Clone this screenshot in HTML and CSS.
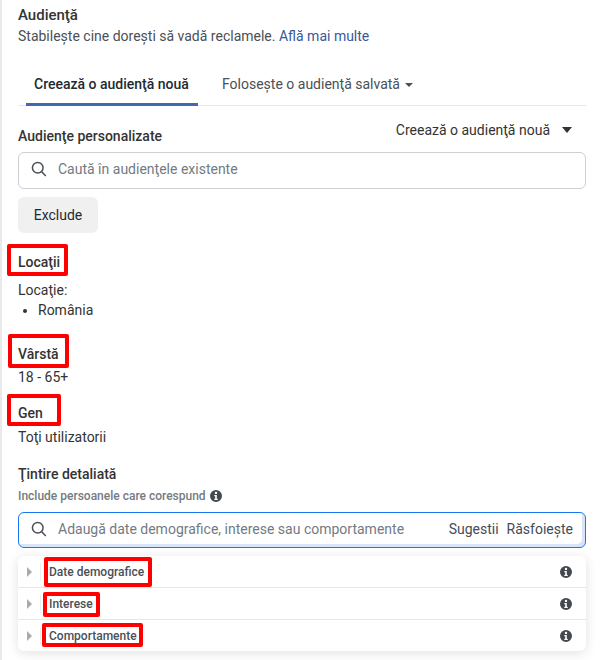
FILE: index.html
```html
<!DOCTYPE html>
<html lang="ro">
<head>
<meta charset="utf-8">
<title>Audienţă</title>
<link rel="stylesheet" href="styles.css">
</head>
<body>
<main class="page">
  <h1 class="title">Audienţă</h1>
  <p class="subtitle">Stabileşte cine doreşti să vadă reclamele. <a class="link" href="#">Află mai multe</a></p>

  <nav class="tabs">
    <a class="tab tab-active" href="#">Creează o audienţă nouă</a>
    <a class="tab" href="#">Foloseşte o audienţă salvată<span class="caret caret-small"></span></a>
  </nav>

  <section class="custom">
    <div class="custom-head">
      <h2 class="label">Audienţe personalizate</h2>
      <span class="create">Creează o audienţă nouă<span class="caret"></span></span>
    </div>
    <div class="search">
      <svg class="search-icon" viewBox="0 0 18 18"><circle cx="7.6" cy="7.6" r="6" /><path d="M12 12l4.6 4.8" /></svg>
      <span class="placeholder">Caută în audienţele existente</span>
    </div>
    <button class="btn" type="button">Exclude</button>
  </section>

  <section class="loc">
    <h2 class="label">Locaţii</h2>
    <p class="text loc-name">Locaţie:</p>
    <ul class="list"><li>România</li></ul>
  </section>

  <section class="age">
    <h2 class="label">Vârstă</h2>
    <p class="text">18 - 65+</p>
  </section>

  <section class="gender">
    <h2 class="label">Gen</h2>
    <p class="text gender-value">Toţi utilizatorii</p>
  </section>

  <section class="detail">
    <h2 class="label">Ţintire detaliată</h2>
    <p class="hint">Include persoanele care corespund
      <svg class="info info-hint" viewBox="0 0 12 12"><use href="#i"/></svg>
    </p>
    <div class="search search-focus">
      <svg class="search-icon" viewBox="0 0 18 18"><circle cx="7.6" cy="7.6" r="6" /><path d="M12 12l4.6 4.8" /></svg>
      <span class="placeholder grow">Adaugă date demografice, interese sau comportamente</span>
      <span class="action">Sugestii</span>
      <span class="action">Răsfoieşte</span>
    </div>
    <ul class="tree">
      <li class="row"><span class="arrow"></span><span class="sep"></span><span class="row-name">Date demografice</span><svg class="info" viewBox="0 0 12 12"><use href="#i"/></svg></li>
      <li class="row"><span class="arrow"></span><span class="sep"></span><span class="row-name">Interese</span><svg class="info" viewBox="0 0 12 12"><use href="#i"/></svg></li>
      <li class="row"><span class="arrow"></span><span class="sep"></span><span class="row-name">Comportamente</span><svg class="info" viewBox="0 0 12 12"><use href="#i"/></svg></li>
    </ul>
  </section>

  <div class="mark m1"></div>
  <div class="mark m2"></div>
  <div class="mark m3"></div>
  <div class="mark m4"></div>
  <div class="mark m5"></div>
  <div class="mark m6"></div>
</main>
<svg class="defs" width="0" height="0"><defs><g id="i"><path fill-rule="evenodd" d="M6 0a6 6 0 1 1 0 12A6 6 0 0 1 6 0zM4.8 2.9a1.2 1.2 0 1 0 2.4 0 1.2 1.2 0 0 0-2.4 0zM4.3 5v1.2h.9v2.6h-.9V10h3.4V8.800h-.9V5z"/></g></defs></svg>
</body>
</html>
```
FILE: styles.css
```css
* { box-sizing: border-box; }
html, body { margin: 0; padding: 0; background: #fff; }
body { font-family: Roboto, "Liberation Sans", sans-serif; color: #1c2b33; overflow: hidden; }
.page { position: relative; width: 602px; height: 660px; overflow: hidden; border-left: 2px solid #e9e9e9; padding: 6px 16px 0 16px; font-size: 14px; line-height: 18px; }
.title { margin: 0; font-size: 15px; font-weight: 500; line-height: 18px; color: #333; }
.subtitle { margin: 3px 0 0; color: #4b4f56; line-height: 18px; }
.link { color: #385898; text-decoration: none; }
.tabs { display: flex; margin-top: 26px; height: 35px; border-bottom: 1px solid #e4e6eb; padding-left: 8px; }
.tab { height: 35px; color: #4b4f56; text-decoration: none; padding: 4px 8px 0; line-height: 18px; margin-right: 16px; }
.tab-active { font-weight: 500; color: #1c2b33; border-bottom: 3px solid #4267b2; width: 172px; margin-right: 16px; white-space: nowrap; }
.caret { display: inline-block; width: 0; height: 0; border-left: 5.500px solid transparent; border-right: 5.500px solid transparent; border-top: 6px solid #333; margin-left: 12px; vertical-align: 2px; }
.caret-small { border-left-width: 4.500px; border-right-width: 4.500px; border-top-width: 4.500px; margin-left: 5px; border-top-color: #4b4f56; vertical-align: 2px; }
.custom-head { display: flex; justify-content: space-between; margin-top: 13px; height: 33px; }
.create { color: #333; padding: 2px 14px 0 0; }
.label { margin: 0; font-size: 14px; font-weight: 500; line-height: 18px; color: #333; }
.custom-head .label { padding-top: 8px; }
.search { display: flex; align-items: center; height: 37px; border: 1px solid #ccd0d5; border-radius: 6px; padding: 0 12px 3px; background: #fff; }
.search-focus { height: 36px; padding-bottom: 2px; border-color: #1877f2; box-shadow: inset -3px -3px 0 #d8e4f8; }
.search-icon { width: 16px; height: 16px; fill: none; stroke: #4b4f56; stroke-width: 1.700; flex: none; margin-right: 11px; }
.placeholder { color: #737b82; white-space: nowrap; }
.grow { flex: 1; }
.action { color: #444c58; margin-left: 8px; white-space: nowrap; }
.btn { display: block; margin-top: 8px; width: 80px; height: 36px; border: 0; border-radius: 6px; background: #f0f0f0; color: #1c2b33; font: 400 14px/18px Roboto, "Liberation Sans", sans-serif; }
.loc { margin-top: 20px; }
.text { margin: 0; color: #333; line-height: 18px; }
.loc-name { margin-top: 10px; }
.list { margin: 2px 0 0; padding: 0 0 0 20px; color: #333; }
.age { margin-top: 26px; }
.age .text { margin-top: 5px; }
.gender { margin-top: 18px; }
.gender-value { margin-top: 6px; }
.detail { margin-top: 19px; }
.hint { margin: 5px 0 8px; font-size: 12px; font-weight: 500; line-height: 16px; color: #757b82; display: flex; align-items: center; gap: 4px; }
.info { width: 12px; height: 12px; fill: #444950; flex: none; }
.info-hint { margin-left: 0; }
.tree { list-style: none; margin: 8px 0 0; padding: 0; height: 95px; border-radius: 6px; background: #fff; box-shadow: 0 2px 12px rgba(0,0,0,.12); }
.row { display: flex; align-items: center; height: 32px; border-bottom: 1px solid #e4e6eb; padding: 0 14px 0 9px; }
.row:last-child { border-bottom: 0; height: 31px; }
.arrow { width: 0; height: 0; border-left: 5px solid #a8abaf; border-top: 5px solid transparent; border-bottom: 5px solid transparent; }
.sep { width: 1px; height: 18px; background: #eceef0; margin-left: 8px; margin-right: 8px; }
.row-name { flex: 1; font-size: 12px; font-weight: 500; color: #4b4f56; }
.mark { position: absolute; border: 4px solid #f00; border-radius: 2px; }
.m1 { left: 5px; top: 244px; width: 61px; height: 32px; }
.m2 { left: 6px; top: 334px; width: 61px; height: 34px; }
.m3 { left: 5px; top: 394px; width: 54px; height: 32px; }
.m4 { left: 42px; top: 557px; width: 108px; height: 30px; }
.m5 { left: 41px; top: 592px; width: 57px; height: 25px; }
.m6 { left: 40px; top: 623px; width: 101px; height: 24px; }
.defs { position: absolute; }
```
